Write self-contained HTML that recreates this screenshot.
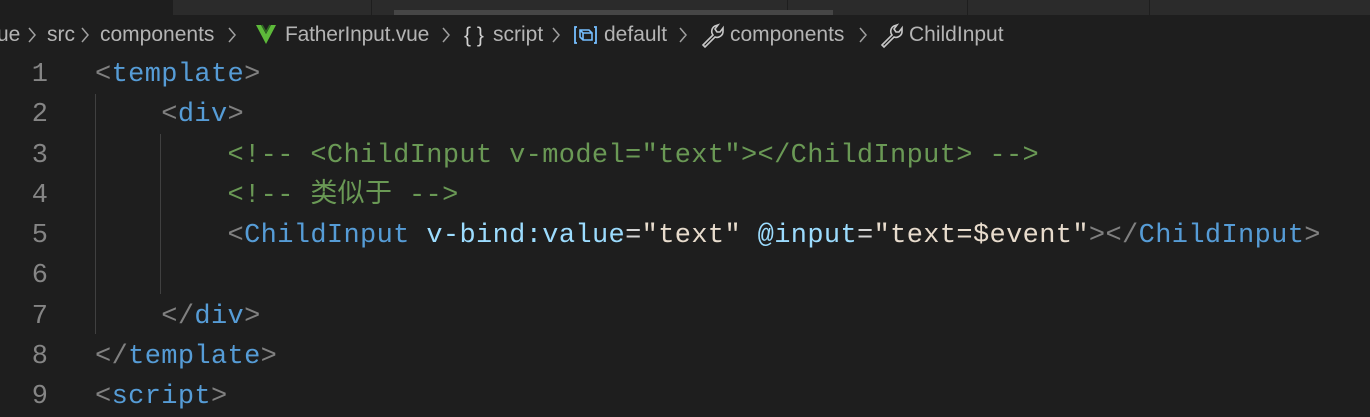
<!DOCTYPE html>
<html><head><meta charset="utf-8"><style>
body{margin:0;width:1370px;height:408px;background:#1e1e1e;overflow:hidden;position:relative;font-family:"Liberation Sans",sans-serif}
.tabs{position:absolute;top:0;left:173px;right:0;height:15px;background:#2b2b2b}
.tb{position:absolute;top:0;height:15px;width:1px;background:#1e1e1e}
.sb{position:absolute;top:10px;height:5px;left:394px;width:439px;background:#464646}
.bc{position:absolute;top:21px;height:28px;line-height:28px;font-size:21px;color:#b4b4b4;white-space:nowrap}
.code{position:absolute;top:55px;left:0;font-family:"Liberation Mono","Noto Sans CJK SC",monospace;font-size:27px}
.l{height:40.25px;line-height:40px;white-space:pre;position:relative}
.n{position:absolute;left:0;width:48px;text-align:right;color:#858585}
.t{position:absolute;left:95px;color:#d4d4d4;letter-spacing:0.36px}
.g{color:#808080}.b{color:#569cd6}.c{color:#6a9955}.a{color:#9cdcfe}.st{color:#e8dccd}
.ig{position:absolute;width:1px;background:#404040}
</style></head><body>
<div class="tabs"></div>
<div class="tb" style="left:371px"></div><div class="tb" style="left:787px"></div><div class="tb" style="left:967px"></div><div class="tb" style="left:1149px"></div>
<div class="sb"></div>
<div class="bc" style="left:-3px">ue</div>
<div class="bc" style="left:47px">src</div>
<div class="bc" style="left:100px">components</div>
<div class="bc" style="left:285px;letter-spacing:-0.2px">FatherInput.vue</div>
<div class="bc" style="left:493px">script</div>
<div class="bc" style="left:604px">default</div>
<div class="bc" style="left:730px">components</div>
<div class="bc" style="left:909px">ChildInput</div>
<svg width="1370" height="60" style="position:absolute;left:0;top:0" fill="none" stroke="#a0a0a0" stroke-width="1.5">
<path d="M29 28l6 7-6 7M82 28l6 7-6 7M229 28l6 7-6 7M443 28l6 7-6 7M553 28l6 7-6 7M680 28l6 7-6 7M860 28l6 7-6 7"/>
<path d="M256 25l10 19 10-19h-5l-5 9-5-9z" fill="#5dba3a" stroke="none"/>
<path d="M262 25l4 7 4-7" stroke="#2f6b22" stroke-width="1.5"/>
<text x="464" y="42" fill="#d0d0d0" stroke="none" font-size="21" font-family="Liberation Sans">{ }</text>
<path d="M577 27h-2v16h2M594 27h2v16h-2" stroke="#75beff" stroke-width="1.8"/>
<path d="M580 30h9l3 3v7h-9l-3-3z M580 30l3 3h9M583 33v7" stroke="#75beff" stroke-width="1.6"/>
<g stroke="#c8c8c8" stroke-width="1.6">
<path d="M703 45l10-10a6 6 0 0 1 2-9l3-1-3 4 2 3 3 0 3-4 0 3a6 6 0 0 1-8 6l-10 10z"/>
<path d="M882 45l10-10a6 6 0 0 1 2-9l3-1-3 4 2 3 3 0 3-4 0 3a6 6 0 0 1-8 6l-10 10z"/>
</g>
</svg>
<div class="ig" style="left:95px;top:94px;height:240px"></div>
<div class="ig" style="left:160px;top:134px;height:160px"></div>
<div class="code">
<div class="l"><span class="n">1</span><span class="t"><span class="g">&lt;</span><span class="b">template</span><span class="g">&gt;</span></span></div>
<div class="l"><span class="n">2</span><span class="t">    <span class="g">&lt;</span><span class="b">div</span><span class="g">&gt;</span></span></div>
<div class="l"><span class="n">3</span><span class="t c">        &lt;!-- &lt;ChildInput v-model="text"&gt;&lt;/ChildInput&gt; --&gt;</span></div>
<div class="l"><span class="n">4</span><span class="t c">        &lt;!-- 类似于 --&gt;</span></div>
<div class="l"><span class="n">5</span><span class="t">        <span class="g">&lt;</span><span class="b">ChildInput</span> <span class="a">v-bind:value</span>=<span class="st">"text"</span> <span class="a">@input</span>=<span class="st">"text=$event"</span><span class="g">&gt;&lt;/</span><span class="b">ChildInput</span><span class="g">&gt;</span></span></div>
<div class="l"><span class="n">6</span></div>
<div class="l"><span class="n">7</span><span class="t">    <span class="g">&lt;/</span><span class="b">div</span><span class="g">&gt;</span></span></div>
<div class="l"><span class="n">8</span><span class="t"><span class="g">&lt;/</span><span class="b">template</span><span class="g">&gt;</span></span></div>
<div class="l"><span class="n">9</span><span class="t"><span class="g">&lt;</span><span class="b">script</span><span class="g">&gt;</span></span></div>
</div>
</body></html>
